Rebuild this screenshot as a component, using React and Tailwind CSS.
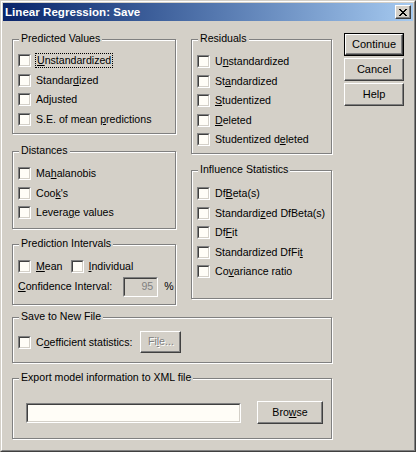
import React from 'react';

const Ul = ({ t, i }) =>
  i == null ? t : (
    <>
      {t.slice(0, i)}
      <u className="underline underline-offset-[1px]">{t[i]}</u>
      {t.slice(i + 1)}
    </>
  );

function Checkbox() {
  return (
    <span className="block w-[13px] h-[13px] shrink-0 border border-t-[#808080] border-l-[#808080] border-r-white border-b-white">
      <span className="block w-full h-full border border-t-[#404040] border-l-[#404040] border-r-[#d4d0c8] border-b-[#d4d0c8] bg-[#fffdf7]" />
    </span>
  );
}

function CheckRow({ label, u, focus }) {
  return (
    <div className="flex items-center h-[19.5px]">
      <Checkbox />
      {focus ? (
        <span className="ml-[4px] leading-[13px] border border-dotted border-black px-px whitespace-nowrap">
          <Ul t={label} i={u} />
        </span>
      ) : (
        <span className="ml-[5px] leading-[13px] whitespace-nowrap">
          <Ul t={label} i={u} />
        </span>
      )}
    </div>
  );
}

function Group({ title, className, children }) {
  return (
    <div className={`relative border border-[#808080] shadow-[1px_1px_0_#fff,inset_1px_1px_0_#fff] ${className}`}>
      <span className="absolute left-[6px] top-[-8px] bg-[#d4d0c8] px-[2px] leading-[13px] whitespace-nowrap">{title}</span>
      {children}
    </div>
  );
}

function Button({ children, className = '', disabled }) {
  return (
    <div
      className={`flex items-center justify-center border border-t-white border-l-white border-r-[#404040] border-b-[#404040] shadow-[inset_-1px_-1px_0_#808080] ${className}`}
    >
      {disabled ? (
        <span className="text-[#808080] [text-shadow:1px_1px_0_#fff]">{children}</span>
      ) : (
        <span>{children}</span>
      )}
    </div>
  );
}

function Sunken({ className = '', children }) {
  return (
    <div className={`border border-t-[#808080] border-l-[#808080] border-r-white border-b-white ${className}`}>
      {children}
    </div>
  );
}

export default function App() {
  return (
    <div className="w-[416px] h-[452px] bg-[#d4d0c8] border border-t-[#d4d0c8] border-l-[#d4d0c8] border-r-[#404040] border-b-[#404040] font-['Liberation_Sans',Arial,sans-serif] text-[10.6px] text-black select-none">
      <div className="h-full border border-t-white border-l-white border-r-[#808080] border-b-[#808080] p-px">
        {/* title bar */}
        <div className="flex items-center h-[18px] bg-linear-to-r from-[#0a246a] to-[#a6caf0] pl-[2px] pr-[2px]">
          <span className="flex-1 text-white font-bold text-[11.6px] leading-[18px]">Linear Regression: Save</span>
          <div className="w-[16px] h-[14px] flex items-center justify-center bg-[#d4d0c8] border border-t-white border-l-white border-r-[#404040] border-b-[#404040] shadow-[inset_-1px_-1px_0_#808080]">
            <svg width="8" height="7" viewBox="0 0 8 7" shapeRendering="crispEdges">
              <path d="M0 0h2v1H0zM6 0h2v1H6zM1 1h2v1H1zM5 1h2v1H5zM2 2h4v1H2zM3 3h2v1H3zM2 4h4v1H2zM1 5h2v1H1zM5 5h2v1H5zM0 6h2v1H0zM6 6h2v1H6z" fill="#000" />
            </svg>
          </div>
        </div>

        {/* body */}
        <div className="flex pl-[9px]">
          <div className="w-[320px] mt-[18px]">
            <div className="flex items-start justify-between">
              <div className="w-[164px]">
                <Group title="Predicted Values" className="h-[95px] pl-[5px] pt-[11px]">
                  <CheckRow label="Unstandardized" u={0} focus />
                  <CheckRow label="Standardized" u={7} />
                  <CheckRow label="Adjusted" />
                  <CheckRow label="S.E. of mean predictions" u={13} />
                </Group>
                <Group title="Distances" className="h-[78px] mt-[17px] pl-[5px] pt-[12px]">
                  <CheckRow label="Mahalanobis" u={2} />
                  <CheckRow label="Cook's" u={3} />
                  <CheckRow label="Leverage values" u={6} />
                </Group>
                <Group title="Prediction Intervals" className="h-[61px] mt-[15px] pl-[5px] pt-[12px]">
                  <div className="flex items-center h-[19.5px]">
                    <Checkbox />
                    <span className="ml-[5px] leading-[13px]"><Ul t="Mean" i={0} /></span>
                    <span className="ml-[8px]"><Checkbox /></span>
                    <span className="ml-[5px] leading-[13px]"><Ul t="Individual" i={0} /></span>
                  </div>
                  <div className="flex items-center h-[20px]">
                    <span className="leading-[13px] whitespace-nowrap"><Ul t="Confidence Interval:" i={0} /></span>
                    <Sunken className="ml-[11px] w-[35px] h-[20px] shrink-0">
                      <div className="h-full border border-t-[#404040] border-l-[#404040] border-r-[#d4d0c8] border-b-[#d4d0c8] bg-[#d4d0c8] flex items-center justify-end pr-[3px] text-[#808080]">
                        95
                      </div>
                    </Sunken>
                    <span className="ml-[6px] leading-[13px]">%</span>
                  </div>
                </Group>
              </div>
              <div className="w-[141px]">
                <Group title="Residuals" className="h-[115px] pl-[5px] pt-[12px]">
                  <CheckRow label="Unstandardized" u={1} />
                  <CheckRow label="Standardized" u={2} />
                  <CheckRow label="Studentized" u={0} />
                  <CheckRow label="Deleted" u={0} />
                  <CheckRow label="Studentized deleted" u={13} />
                </Group>
                <Group title="Influence Statistics" className="h-[129px] mt-[16px] pl-[5px] pt-[13px]">
                  <CheckRow label="DfBeta(s)" u={2} />
                  <CheckRow label="Standardized DfBeta(s)" u={9} />
                  <CheckRow label="DfFit" u={2} />
                  <CheckRow label="Standardized DfFit" u={17} />
                  <CheckRow label="Covariance ratio" u={2} />
                </Group>
              </div>
            </div>

            <Group title="Save to New File" className="h-[46px] mt-[12px] pl-[5px] pt-[13px]">
              <div className="flex items-center h-[22px]">
                <Checkbox />
                <span className="ml-[5px] leading-[13px] whitespace-nowrap"><Ul t="Coefficient statistics:" i={1} /></span>
                <Button disabled className="ml-[8px] w-[41px] h-[22px]"><Ul t="File..." i={2} /></Button>
              </div>
            </Group>

            <Group title="Export model information to XML file" className="h-[61px] mt-[15px] pl-[13px] pt-[22px]">
              <div className="flex items-center h-[23px]">
                <Sunken className="w-[215px] h-[20px]">
                  <div className="h-full border border-t-[#404040] border-l-[#404040] border-r-[#d4d0c8] border-b-[#d4d0c8] bg-[#fffdf7]" />
                </Sunken>
                <Button className="ml-[16px] w-[66px] h-[23px]"><Ul t="Browse" i={3} /></Button>
              </div>
            </Group>
          </div>

          {/* buttons */}
          <div className="ml-[12px] mt-[12px] flex flex-col gap-[2px] text-[11px]">
            <div className="w-[60px] h-[23px] border border-black">
              <Button className="w-full h-full">Continue</Button>
            </div>
            <Button className="w-[60px] h-[23px]">Cancel</Button>
            <Button className="w-[60px] h-[23px]">Help</Button>
          </div>
        </div>
      </div>
    </div>
  );
}
